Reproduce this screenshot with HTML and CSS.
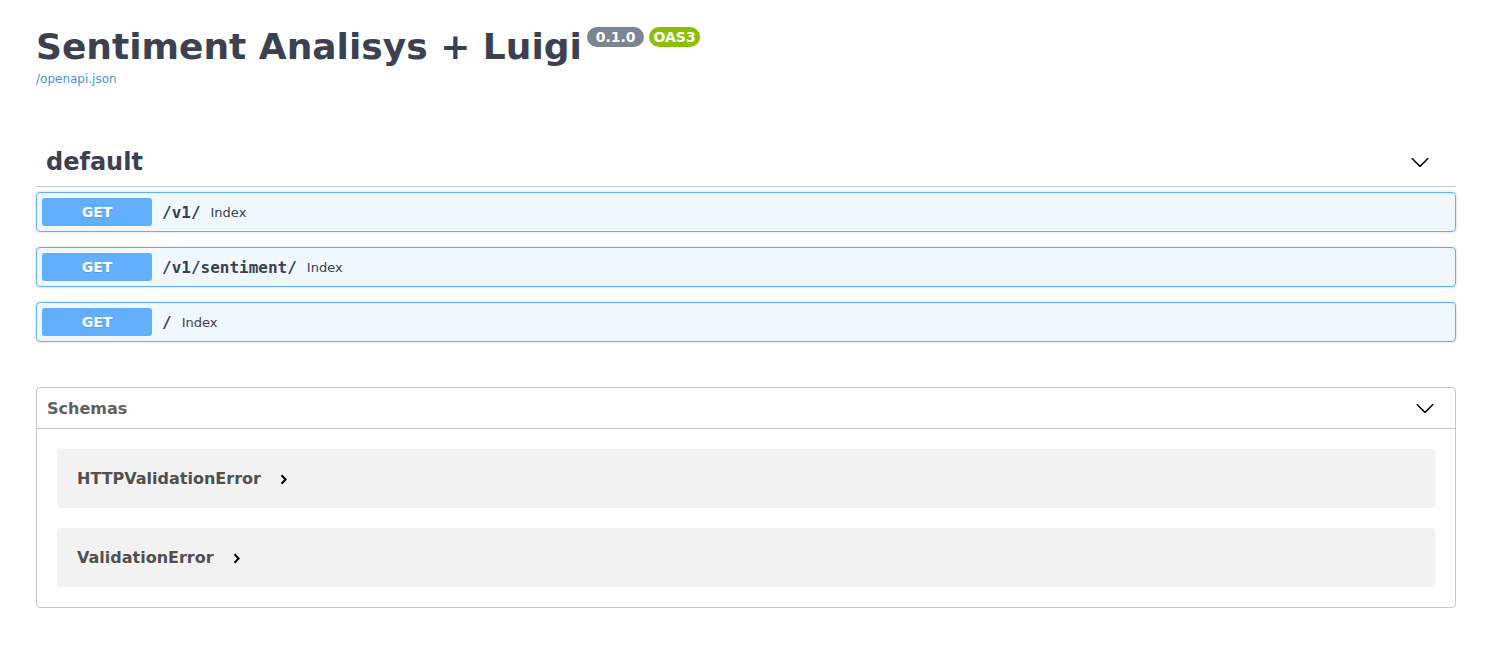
FILE: index.html
```html
<!DOCTYPE html>
<html>
<head>
<meta charset="utf-8">
<title>Sentiment Analisys + Luigi - Swagger UI</title>
<link rel="stylesheet" href="styles.css">
</head>
<body>
<div class="wrapper">
  <div class="info">
    <h2 class="title">
      <span class="title-text">Sentiment Analisys + Luigi</span>
      <span class="badge badge-version"> 0.1.0 </span>
      <span class="badge badge-oas">OAS3</span>
    </h2>
    <a class="spec-link" href="#">/openapi.json</a>
  </div>

  <div class="tag-section">
    <div class="tag-header">
      <h3 class="tag-name">default</h3>
      <svg class="chev-down" width="20" height="20" viewBox="0 0 20 20"><path d="M17.418 6.109c.272-.268.709-.268.979 0s.271.701 0 .969l-7.908 7.83c-.27.268-.707.268-.979 0l-7.908-7.830c-.27-.268-.27-.701 0-.969.271-.268.709-.268.979 0L10 13.25l7.418-7.141z"/></svg>
    </div>
    <div class="opblock">
      <span class="method">GET</span>
      <span class="path">/v1/</span>
      <span class="desc">Index</span>
    </div>
    <div class="opblock">
      <span class="method">GET</span>
      <span class="path">/v1/sentiment/</span>
      <span class="desc">Index</span>
    </div>
    <div class="opblock">
      <span class="method">GET</span>
      <span class="path">/</span>
      <span class="desc">Index</span>
    </div>
  </div>

  <section class="models">
    <div class="models-header">
      <h4 class="models-title">Schemas</h4>
      <svg class="chev-down" width="20" height="20" viewBox="0 0 20 20"><path d="M17.418 6.109c.272-.268.709-.268.979 0s.271.701 0 .969l-7.908 7.83c-.27.268-.707.268-.979 0l-7.908-7.83c-.27-.268-.27-.701 0-.969.271-.268.709-.268.979 0L10 13.25l7.418-7.141z"/></svg>
    </div>
    <div class="models-body">
      <div class="model-item">
        <span class="model-title">HTTPValidationError</span>
        <svg class="chev-right" width="8" height="11" viewBox="0 0 8 11"><path d="M1.5 1.2 L5.6 5.5 L1.5 9.8" fill="none" stroke="#000" stroke-width="2"/></svg>
      </div>
      <div class="model-item">
        <span class="model-title">ValidationError</span>
        <svg class="chev-right" width="8" height="11" viewBox="0 0 8 11"><path d="M1.5 1.2 L5.6 5.5 L1.5 9.8" fill="none" stroke="#000" stroke-width="2"/></svg>
      </div>
    </div>
  </section>
</div>
</body>
</html>
```
FILE: styles.css
```css
html, body {
  margin: 0;
  padding: 0;
  background: #fff;
}
body {
  font-family: "DejaVu Sans", sans-serif;
  color: #3b4151;
}
.wrapper {
  width: 1420px;
  margin-left: 36px;
}
.info {
  padding-top: 26px;
}
.title {
  display: flex;
  align-items: flex-start;
  margin: 0;
  font-size: 36px;
  font-weight: 700;
  line-height: normal;
  color: #3b4151;
}
.badge {
  display: inline-block;
  margin-top: 1px;
  margin-left: 5px;
  padding: 2px 4px;
  border-radius: 57px;
  color: #fff;
  font-size: 14px;
  font-weight: 700;
  line-height: 16px;
  white-space: pre;
}
.badge-version {
  background: #7d8492;
}
.badge-oas {
  background: #89bf04;
}
.spec-link {
  display: block;
  margin-top: 5px;
  font-size: 12px;
  color: #4990e2;
  text-decoration: none;
}
.tag-section {
  margin-top: 52px;
}
.tag-header {
  display: flex;
  align-items: center;
  justify-content: space-between;
  padding: 10px 26px 10px 10px;
  border-bottom: 1px solid rgba(59, 65, 81, 0.3);
  margin-bottom: 5px;
}
.tag-name {
  margin: 0;
  font-size: 24px;
  font-weight: 700;
  line-height: 28px;
}
.chev-down {
  fill: #000;
}
.opblock {
  display: flex;
  align-items: center;
  padding: 5px;
  margin-bottom: 15px;
  border: 1px solid #61affe;
  border-radius: 4px;
  background: rgba(97, 175, 254, 0.1);
  box-shadow: 0 0 3px rgba(0, 0, 0, 0.19);
}
.method {
  display: inline-block;
  min-width: 80px;
  padding: 6px 15px;
  border-radius: 3px;
  background: #61affe;
  color: #fff;
  font-size: 14px;
  font-weight: 700;
  line-height: 16px;
  text-align: center;
  text-shadow: 0 1px 0 rgba(0, 0, 0, 0.1);
}
.path {
  padding: 0 10px;
  font-family: "DejaVu Sans Mono", monospace;
  font-size: 16px;
  font-weight: 700;
}
.desc {
  font-size: 13px;
}
.models {
  margin-top: 45px;
  border: 1px solid rgba(59, 65, 81, 0.3);
  border-radius: 4px;
}
.models-header {
  display: flex;
  align-items: center;
  justify-content: space-between;
  height: 41px;
  box-sizing: border-box;
  padding: 0 20px 0 10px;
  border-bottom: 1px solid rgba(59, 65, 81, 0.3);
}
.models-title {
  margin: 0;
  font-size: 16px;
  font-weight: 700;
  color: #606060;
}
.models-body {
  padding: 20px 20px 0;
}
.model-item {
  display: flex;
  align-items: center;
  height: 59px;
  box-sizing: border-box;
  padding: 0 20px;
  margin-bottom: 20px;
  border-radius: 4px;
  background: rgba(0, 0, 0, 0.05);
}
.model-title {
  font-size: 16px;
  font-weight: 700;
  color: #505050;
}
.chev-right {
  margin-left: 19px;
  margin-top: 2px;
}
```
